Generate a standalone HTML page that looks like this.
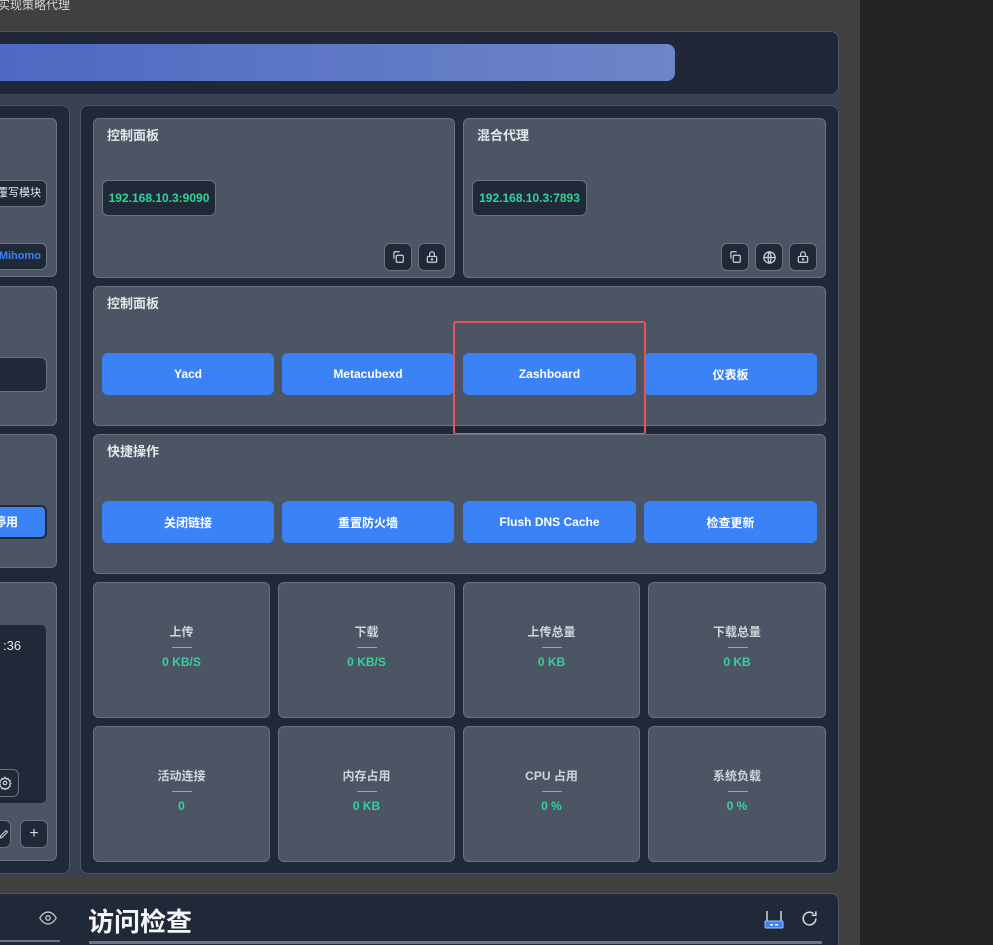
<!DOCTYPE html>
<html><head><meta charset="utf-8"><style>
*{box-sizing:border-box;margin:0;padding:0}
html,body{width:993px;height:945px;overflow:hidden}
body{background:#404040;font-family:"Liberation Sans","Noto Sans CJK SC",sans-serif;position:relative}
.a{position:absolute}
.dark{background:#1f2937;border:1px solid #4b5563;border-radius:8px}
.card{position:absolute;background:#4b5563;border:1px solid #6b7280;border-radius:6px}
.ttl{position:absolute;left:13px;top:6px;font-size:13px;font-weight:bold;color:#e5e7eb}
.ip{position:absolute;background:#1f2937;border:1px solid #6b7280;border-radius:6px;color:#34d399;font-weight:bold;font-size:12px;display:flex;align-items:center;justify-content:center}
.ib{position:absolute;width:28px;height:28px;background:#1f2937;border:1px solid #6b7280;border-radius:6px;display:flex;align-items:center;justify-content:center}
.btn{position:absolute;height:42px;background:#3b82f6;border-radius:6px;color:#fff;font-size:12px;font-weight:bold;display:flex;align-items:center;justify-content:center}
.st{position:absolute;width:177px;height:136px;background:#4b5563;border:1px solid #6b7280;border-radius:6px;text-align:center}
.st .l{position:absolute;top:40px;width:100%;font-size:12px;font-weight:bold;color:#d1d5db}
.st .ln{position:absolute;top:64px;left:78px;width:20px;height:1px;background:#9ca3af}
.st .v{position:absolute;top:72px;width:100%;font-size:12px;font-weight:bold;color:#34d399}
svg{display:block}
</style></head><body>
<div class="a" style="left:860px;top:0;width:133px;height:945px;background:#232323"></div>
<div class="a" style="left:-2px;top:-4px;font-size:12px;color:#d1d5db">实现策略代理</div>
<div class="a dark" style="left:-10px;top:31px;width:849px;height:64px;background:#1f2738"></div>
<div class="a" style="left:0;top:44px;width:675px;height:37px;border-radius:0 8px 8px 0;background:linear-gradient(90deg,#4f68c2,#6d86c8)"></div>
<div class="a" style="left:-10px;top:94px;width:849px;height:781px;background:#374151;border-radius:0 0 8px 8px"></div>
<div class="a dark" style="left:-10px;top:105px;width:80px;height:769px"></div>
<div class="a dark" style="left:80px;top:105px;width:759px;height:769px"></div>

<!-- left panel -->
<div class="card" style="left:-10px;top:118px;width:67px;height:159px"></div>
<div class="a" style="left:-10px;top:180px;width:57px;height:27px;background:#1f2937;border:1px solid #6b7280;border-radius:6px;color:#e5e7eb;font-size:11px;line-height:25px;text-align:right;padding-right:5px;white-space:nowrap;overflow:hidden">覆写模块</div>
<div class="a" style="left:-10px;top:243px;width:57px;height:27px;background:#1f2937;border:1px solid #6b7280;border-radius:6px;color:#3b82f6;font-size:11px;font-weight:bold;line-height:25px;text-align:right;padding-right:5px">Mihomo</div>
<div class="card" style="left:-10px;top:286px;width:67px;height:140px"></div>
<div class="a" style="left:-10px;top:357px;width:57px;height:35px;background:#1f2937;border:1px solid #6b7280;border-radius:6px"></div>
<div class="card" style="left:-10px;top:434px;width:67px;height:134px"></div>
<div class="a" style="left:-10px;top:505px;width:57px;height:34px;background:#3b82f6;border:2px solid #1f2937;border-radius:6px;color:#fff;font-size:12px;font-weight:bold;line-height:30px;text-align:right;padding-right:27px;white-space:nowrap;overflow:hidden">停用</div>
<div class="card" style="left:-10px;top:582px;width:67px;height:279px"></div>
<div class="a" style="left:-10px;top:624px;width:57px;height:180px;background:#1f2937;border:1px solid #4b5563;border-radius:6px"></div>
<div class="a" style="left:3px;top:638px;color:#e5e7eb;font-size:13px">:36</div>
<div class="ib" style="left:-9px;top:769px"><svg width="14" height="14" viewBox="0 0 24 24" fill="none" stroke="#d1d5db" stroke-width="2"><circle cx="12" cy="12" r="3"/><path d="M12 2l2 3 3-1 1 3 3 1-1 3 2 2-2 2 1 3-3 1-1 3-3-1-2 3-2-3-3 1-1-3-3-1 1-3-2-2 2-2-1-3 3-1 1-3 3 1z"/></svg></div>
<div class="ib" style="left:-17px;top:820px;padding-left:14px"><svg width="12" height="12" viewBox="0 0 24 24" fill="none" stroke="#d1d5db" stroke-width="2"><path d="M4 20l4-1 11-11-3-3L5 16z"/></svg></div>
<div class="ib" style="left:20px;top:820px;color:#d1d5db;font-size:16px">+</div>

<!-- right top cards -->
<div class="card" style="left:93px;top:118px;width:362px;height:160px"><div class="ttl">控制面板</div></div>
<div class="ip" style="left:102px;top:180px;width:114px;height:36px">192.168.10.3:9090</div>
<div class="card" style="left:463px;top:118px;width:363px;height:160px"><div class="ttl">混合代理</div></div>
<div class="ip" style="left:472px;top:180px;width:115px;height:36px">192.168.10.3:7893</div>
<div class="ib" style="left:384px;top:243px"><svg width="14" height="14" viewBox="0 0 24 24" fill="none" stroke="#d1d5db" stroke-width="2"><rect x="9" y="9" width="12" height="12" rx="2"/><path d="M5 15V5a2 2 0 012-2h8"/></svg></div>
<div class="ib" style="left:418px;top:243px"><svg width="14" height="14" viewBox="0 0 24 24" fill="none" stroke="#d1d5db" stroke-width="2"><rect x="4" y="11" width="16" height="10" rx="2"/><path d="M8 11V7a4 4 0 018 0v4"/><circle cx="12" cy="16" r="1"/></svg></div>
<div class="ib" style="left:721px;top:243px"><svg width="14" height="14" viewBox="0 0 24 24" fill="none" stroke="#d1d5db" stroke-width="2"><rect x="9" y="9" width="12" height="12" rx="2"/><path d="M5 15V5a2 2 0 012-2h8"/></svg></div>
<div class="ib" style="left:755px;top:243px"><svg width="15" height="15" viewBox="0 0 24 24" fill="none" stroke="#d1d5db" stroke-width="2"><circle cx="12" cy="12" r="9"/><path d="M3 12h18M12 3c3 3 3 15 0 18M12 3c-3 3-3 15 0 18"/></svg></div>
<div class="ib" style="left:789px;top:243px"><svg width="14" height="14" viewBox="0 0 24 24" fill="none" stroke="#d1d5db" stroke-width="2"><rect x="4" y="11" width="16" height="10" rx="2"/><path d="M8 11V7a4 4 0 018 0v4"/><circle cx="12" cy="16" r="1"/></svg></div>

<div class="card" style="left:93px;top:286px;width:733px;height:140px"><div class="ttl">控制面板</div></div>
<div class="btn" style="left:102px;top:353px;width:172px">Yacd</div>
<div class="btn" style="left:282px;top:353px;width:172px">Metacubexd</div>
<div class="btn" style="left:463px;top:353px;width:173px">Zashboard</div>
<div class="btn" style="left:644px;top:353px;width:173px">仪表板</div>
<div class="a" style="left:453px;top:321px;width:193px;height:114px;border:2px solid #e5535f;border-radius:3px"></div>

<div class="card" style="left:93px;top:434px;width:733px;height:140px"><div class="ttl">快捷操作</div></div>
<div class="btn" style="left:102px;top:501px;width:172px">关闭链接</div>
<div class="btn" style="left:282px;top:501px;width:172px">重置防火墙</div>
<div class="btn" style="left:463px;top:501px;width:173px">Flush DNS Cache</div>
<div class="btn" style="left:644px;top:501px;width:173px">检查更新</div>

<div class="st" style="left:93px;top:582px"><div class="l">上传</div><div class="ln"></div><div class="v">0 KB/S</div></div>
<div class="st" style="left:278px;top:582px"><div class="l">下载</div><div class="ln"></div><div class="v">0 KB/S</div></div>
<div class="st" style="left:463px;top:582px"><div class="l">上传总量</div><div class="ln"></div><div class="v">0 KB</div></div>
<div class="st" style="left:648px;top:582px;width:178px"><div class="l">下载总量</div><div class="ln" style="left:79px"></div><div class="v">0 KB</div></div>
<div class="st" style="left:93px;top:726px"><div class="l">活动连接</div><div class="ln"></div><div class="v">0</div></div>
<div class="st" style="left:278px;top:726px"><div class="l">内存占用</div><div class="ln"></div><div class="v">0 KB</div></div>
<div class="st" style="left:463px;top:726px"><div class="l">CPU 占用</div><div class="ln"></div><div class="v">0 %</div></div>
<div class="st" style="left:648px;top:726px;width:178px"><div class="l">系统负载</div><div class="ln" style="left:79px"></div><div class="v">0 %</div></div>

<!-- bottom -->
<div class="a dark" style="left:-10px;top:893px;width:849px;height:60px;border-radius:8px 8px 0 0"></div>
<div class="a" style="left:39px;top:910px"><svg width="18" height="16" viewBox="0 0 24 20" fill="none" stroke="#d1d5db" stroke-width="1.6"><path d="M1 10c3-5 7-8 11-8s8 3 11 8c-3 5-7 8-11 8S4 15 1 10z"/><circle cx="12" cy="10" r="3"/></svg></div>
<div class="a" style="left:0;top:940px;width:60px;height:2px;background:#6b7280"></div>
<div class="a" style="left:88px;top:902px;font-size:26px;font-weight:bold;color:#f3f4f6">访问检查</div>
<div class="a" style="left:89px;top:941px;width:733px;height:3px;background:#6b7280"></div>
<div class="a" style="left:764px;top:910px"><svg width="20" height="20" viewBox="0 0 20 20"><path d="M3 1v11M17 1v11" stroke="#d1d5db" stroke-width="1.5"/><rect x="1" y="11" width="18" height="7" rx="1" fill="#3b82f6" stroke="#93c5fd"/><rect x="6" y="14" width="3" height="1.5" fill="#fff"/><rect x="11" y="14" width="3" height="1.5" fill="#fff"/></svg></div>
<div class="a" style="left:800px;top:909px"><svg width="19" height="19" viewBox="0 0 24 24" fill="none" stroke="#d1d5db" stroke-width="2"><path d="M20 12a8 8 0 11-3-6.2"/><path d="M20 3v5h-5"/></svg></div>
</body></html>
